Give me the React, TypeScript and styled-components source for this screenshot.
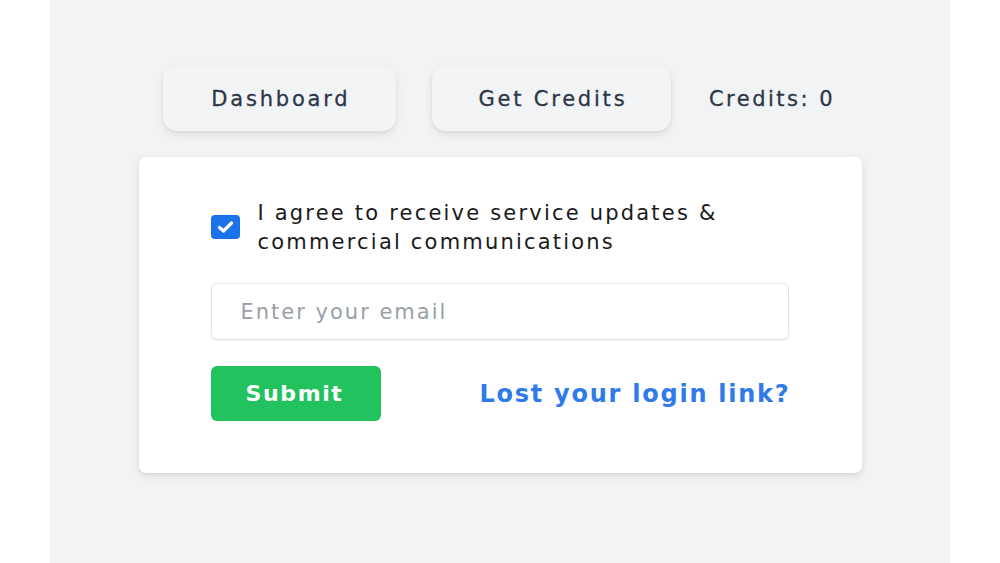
import React from "react";
import styled, { createGlobalStyle } from "styled-components";

const Global = createGlobalStyle`
  html, body { margin: 0; padding: 0; background: #ffffff; }
  body { font-family: "DejaVu Sans", Inter, sans-serif; }
`;

const Page = styled.div`
  width: 1000px;
  height: 563px;
  display: flex;
  justify-content: center;
  background: #ffffff;
`;

const Stage = styled.main`
  width: 900px;
  height: 563px;
  background: #f2f3f5;
  display: flex;
  flex-direction: column;
  align-items: center;
  padding-top: 65px;
  box-sizing: border-box;
`;

const Nav = styled.nav`
  display: flex;
  align-items: center;
  gap: 36px;
  margin-left: -2px;
`;

const NavButton = styled.button<{ $w: number }>`
  width: ${(p) => p.$w}px;
  height: 66px;
  padding: 2px 0 0 3px;
  border: none;
  border-radius: 14px;
  background: #f3f4f6;
  box-shadow: 0 4px 8px rgba(0, 0, 0, 0.08), 0 1px 3px rgba(0, 0, 0, 0.06);
  font-family: "DejaVu Sans", sans-serif;
  font-size: 21px;
  letter-spacing: 2.8px;
  color: #2d3748;
  -webkit-text-stroke: 0.3px #2d3748;
  cursor: pointer;
`;

const CreditText = styled.span`
  font-size: 21px;
  letter-spacing: 2.5px;
  color: #2d3748;
  -webkit-text-stroke: 0.3px #2d3748;
  padding: 2px 0 0 2px;
`;

const Card = styled.section`
  margin-top: 26px;
  width: 723px;
  height: 316px;
  box-sizing: border-box;
  background: #ffffff;
  border-radius: 7px;
  box-shadow: 0 3px 8px rgba(0, 0, 0, 0.1), 0 1px 2px rgba(0, 0, 0, 0.05);
  padding: 42px 73px 0 72px;
  display: flex;
  flex-direction: column;
`;

const AgreeRow = styled.label`
  display: flex;
  align-items: center;
  gap: 18px;
`;

const Check = styled.span`
  width: 29px;
  height: 24px;
  flex: none;
  margin-top: -3px;
  border-radius: 4px;
  background: #1a73e8;
  display: flex;
  align-items: center;
  justify-content: center;
`;

const AgreeText = styled.span`
  font-size: 21px;
  line-height: 29px;
  letter-spacing: 2.2px;
  color: #1a1a1a;
`;

const EmailInput = styled.input`
  margin-top: 26px;
  width: 578px;
  height: 57px;
  box-sizing: border-box;
  border: 1.5px solid #e3e5e8;
  border-radius: 6px;
  box-shadow: 0 1px 2px rgba(0, 0, 0, 0.06);
  padding: 0 29px;
  font-family: "DejaVu Sans", sans-serif;
  font-size: 21px;
  letter-spacing: 2px;
  color: #333;
  outline: none;
  &::placeholder { color: #9aa0a8; }
`;

const Actions = styled.div`
  margin-top: 26px;
  display: flex;
  align-items: center;
  justify-content: space-between;
`;

const Submit = styled.button`
  width: 170px;
  height: 55px;
  padding: 0 2px 0 0;
  border: none;
  border-radius: 6px;
  background: #22c35e;
  color: #ffffff;
  font-family: "DejaVu Sans", sans-serif;
  font-size: 22px;
  font-weight: 700;
  letter-spacing: 1.6px;
`;

const LostLink = styled.a`
  font-size: 24px;
  font-weight: 700;
  letter-spacing: 1.75px;
  margin-right: -2px;
  color: #2f7bea;
  text-decoration: none;
`;

export default function App() {
  return (
    <Page>
      <Global />
      <Stage>
        <Nav>
          <NavButton $w={233}>Dashboard</NavButton>
          <NavButton $w={239}>Get Credits</NavButton>
          <CreditText>Credits: 0</CreditText>
        </Nav>
        <Card>
          <AgreeRow>
            <Check>
              <svg width="17" height="14" viewBox="0 0 17 14">
                <path d="M2.5 7.5 L6.5 11 L14.5 3" stroke="#fff" strokeWidth="3.2" fill="none" strokeLinecap="round" strokeLinejoin="round" />
              </svg>
            </Check>
            <AgreeText>
              I agree to receive service updates &amp;
              <br />
              commercial communications
            </AgreeText>
          </AgreeRow>
          <EmailInput placeholder="Enter your email" />
          <Actions>
            <Submit>Submit</Submit>
            <LostLink href="#">Lost your login link?</LostLink>
          </Actions>
        </Card>
      </Stage>
    </Page>
  );
}
